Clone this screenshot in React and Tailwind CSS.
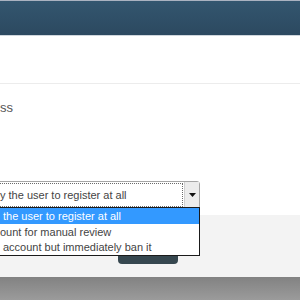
export default function App() {
  return (
    <div className="relative w-[300px] h-[300px] overflow-hidden bg-white text-[13px] text-[#555]" style={{ fontFamily: '"Liberation Sans", Arial, sans-serif' }}>
      {/* Header bar */}
      <header className="h-[36px] border-t border-b border-t-[#aab2c0] border-b-[#cfd6dd] bg-gradient-to-b from-[#33566f] to-[#2c4960]" />

      {/* Form body */}
      <section className="h-[48px] border-b border-[#ececec]" />
      <div className="pt-[16px] leading-[15px] text-[#555]">ss</div>

      <div className="mt-[66px] ml-[-12px] flex h-[28px] w-[212px] border border-[#a5a5a5] rounded-r-[3px] bg-white text-[11px]">
        <div className="m-[1px] flex-1 flex items-center border border-dotted border-[#6a6a6a] pl-[9px] text-[#444] whitespace-nowrap overflow-hidden">
          y the user to register at all
        </div>
        <div className="w-[15px] flex items-center justify-center bg-[#ececec] border-l border-[#d0d0d0]">
          <svg width="7" height="4" viewBox="0 0 7 4">
            <path d="M0 0h7L3.5 4z" fill="#111" />
          </svg>
        </div>
      </div>

      <div className="h-[6px]" />

      {/* Footer with action button */}
      <div className="h-[62px] bg-[#f3f3f3] pt-[18px]">
        <div className="ml-[118px] h-[31px] w-[60px] rounded-b-[4px] bg-[#36474f]" />
      </div>

      {/* Bottom bar */}
      <div className="h-[23px] bg-gradient-to-b from-[#828282] to-[#9b9b9b]" />
      <div className="h-[2px] bg-[#d6d6d6]" />

      {/* Open dropdown list */}
      <ul className="absolute left-[-12px] top-[207px] w-[212px] h-[49px] border border-[#1a1a1a] bg-white text-[11px] leading-[16px] text-[#444] whitespace-nowrap">
        <li className="h-[16px] bg-[#3399ff] pl-[14px] text-white">the user to register at all</li>
        <li className="h-[15px] pl-[11px]">ount for manual review</li>
        <li className="h-[16px] pl-[14px]">account but immediately ban it</li>
      </ul>
    </div>
  );
}
